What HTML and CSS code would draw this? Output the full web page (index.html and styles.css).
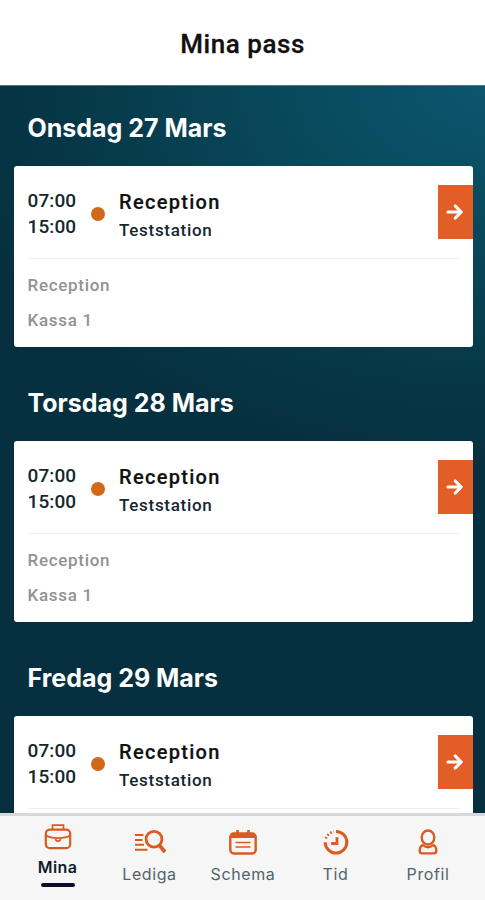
FILE: index.html
```html
<!DOCTYPE html>
<html lang="sv">
<head>
<meta charset="utf-8">
<meta name="viewport" content="width=device-width, initial-scale=1">
<title>Mina pass</title>
<link rel="stylesheet" href="styles.css">
</head>
<body>
<div class="app">
  <header class="header"><h1>Mina pass</h1></header>
  <main class="shifts">
    <section class="day">
      <h2>Onsdag 27 Mars</h2>
      <article class="card">
        <div class="summary">
          <div class="times"><span>07:00</span><span>15:00</span></div>
          <span class="dot"></span>
          <div class="place"><strong>Reception</strong><span>Teststation</span></div>
          <a class="open" href="#" aria-label="Visa"><svg width="18" height="18" viewBox="0 0 18 18"><path d="M2 9H15M9.3 3L15.2 9L9.3 15"/></svg></a>
        </div>
        <div class="details"><span>Reception</span><span>Kassa 1</span></div>
      </article>
    </section>
    <section class="day">
      <h2>Torsdag 28 Mars</h2>
      <article class="card">
        <div class="summary">
          <div class="times"><span>07:00</span><span>15:00</span></div>
          <span class="dot"></span>
          <div class="place"><strong>Reception</strong><span>Teststation</span></div>
          <a class="open" href="#" aria-label="Visa"><svg width="18" height="18" viewBox="0 0 18 18"><path d="M2 9H15M9.3 3L15.2 9L9.3 15"/></svg></a>
        </div>
        <div class="details"><span>Reception</span><span>Kassa 1</span></div>
      </article>
    </section>
    <section class="day">
      <h2>Fredag 29 Mars</h2>
      <article class="card">
        <div class="summary">
          <div class="times"><span>07:00</span><span>15:00</span></div>
          <span class="dot"></span>
          <div class="place"><strong>Reception</strong><span>Teststation</span></div>
          <a class="open" href="#" aria-label="Visa"><svg width="18" height="18" viewBox="0 0 18 18"><path d="M2 9H15M9.3 3L15.2 9L9.3 15"/></svg></a>
        </div>
      </article>
    </section>
  </main>
  <nav class="tabs">
    <a class="tab active" href="#">
      <svg width="28" height="28" viewBox="0 0 28 28"><rect x="1.8" y="6.6" width="24.4" height="18.6" rx="4" stroke-width="2.2"/><path d="M8.5 6V2.2H19.5V6M2 12.5C7 16 21 16 26 12.5M11.5 15.5C11.5 19 16.5 19 16.5 15.5" stroke-width="1.7"/></svg>
      <span>Mina</span>
    </a>
    <a class="tab" href="#">
      <svg width="32" height="28" viewBox="0 0 32 28"><circle cx="20" cy="10.2" r="7.9" stroke-width="2.8"/><path d="M25.5 16.5L31 23" stroke-width="3.8"/><path d="M1 6H9.5M1 11H8.5M1 15.8H10M1 20.7H13.5" stroke-width="2.1"/></svg>
      <span>Lediga</span>
    </a>
    <a class="tab" href="#">
      <svg width="28" height="28" viewBox="0 0 28 28"><rect x="1.3" y="4.5" width="25.4" height="20" rx="3.5" stroke-width="2.4"/><path d="M2 6.5H26" stroke-width="5"/><path d="M8.5 1V5M19.5 1V5" stroke-width="2.6"/><path d="M6.5 13.5H21.5M6.5 18H21.5" stroke-width="1.7"/></svg>
      <span>Schema</span>
    </a>
    <a class="tab" href="#">
      <svg width="28" height="28" viewBox="0 0 28 28"><path d="M14 2.4A10.8 10.8 0 1 1 3.2 13.2" stroke-width="3"/><path d="M3.8 9.6A10.8 10.8 0 0 1 12 2.6" stroke-width="2.6" stroke-dasharray="1.6 2"/><path d="M15 8.2V14.5H9.2" stroke-width="2.8"/></svg>
      <span>Tid</span>
    </a>
    <a class="tab" href="#">
      <svg width="28" height="28" viewBox="0 0 28 28"><ellipse cx="14" cy="8.5" rx="6.3" ry="7" stroke-width="2.4"/><path d="M8.8 16C5 18 4.5 24 8 24.4H20C23.5 24 23 18 19.2 16C16 18.8 12 18.8 8.8 16Z" stroke-width="2.3"/></svg>
      <span>Profil</span>
    </a>
  </nav>
</div>
</body>
</html>
```
FILE: styles.css
```css
* { box-sizing: border-box; }
body { margin: 0; font-family: Roboto, sans-serif; color: #15272e; }
a { color: inherit; text-decoration: none; }
h1, h2 { margin: 0; }
svg { display: block; fill: none; }

.app { height: 900px; display: flex; flex-direction: column; overflow: hidden; background: #fff; }

.header { flex: none; height: 85px; display: flex; align-items: center; justify-content: center; padding-top: 3px; }
.header h1 { font-size: 26px; line-height: 32px; font-weight: 500; color: #111; letter-spacing: 0.55px; -webkit-text-stroke: 0.3px #111; }

.shifts {
  flex: none;
  height: 728px;
  overflow: hidden;
  border-top: 1px solid #527481;
  background: radial-gradient(ellipse 560px 390px at 100% 0, #0b566e 0%, #09485b 38%, #063646 78%, #062f3f 100%);
}
.day { height: 275px; padding: 0 12.5px 0 13.5px; }
.day h2 {
  height: 80px;
  padding: 26px 0 0 14px;
  font: 700 25px/32px Inter, sans-serif;
  color: #fff;
  white-space: nowrap;
}

.card { height: 181px; border-radius: 3px; background: #fff; }
.summary { height: 92px; margin-left: 14px; display: flex; position: relative; }
.summary::after { content: ""; position: absolute; left: 0; right: 13px; bottom: -1px; height: 1px; background: #ededee; }
.times { width: 63px; padding-top: 22px; display: flex; flex-direction: column; font-size: 19px; line-height: 25.5px; font-weight: 500; letter-spacing: 0.1px; }
.dot { width: 14px; height: 14px; margin-top: 40.5px; border-radius: 50%; background: #d2691a; }
.place { margin-left: 14.5px; padding-top: 22px; display: flex; flex-direction: column; }
.place strong { font-size: 20px; line-height: 28px; font-weight: 500; color: #111; letter-spacing: 1.3px; -webkit-text-stroke: 0.2px #111; }
.place span { font-size: 17px; line-height: 29px; font-weight: 500; letter-spacing: 0.7px; }
.open { width: 34.5px; height: 54px; margin: 19px 0 0 auto; display: flex; align-items: center; justify-content: center; background: #e35d27; }
.open path { stroke: #fff; stroke-width: 3.2; stroke-linecap: round; stroke-linejoin: round; }
.details { padding: 10px 0 0 14px; display: flex; flex-direction: column; font-size: 17px; line-height: 35px; font-weight: 500; color: #929292; letter-spacing: 0.7px; }

.tabs { flex: 1; display: grid; grid-template-columns: 103px 81px 106px 79px 106px; padding-left: 6px; border-top: 3px solid #d7d8da; background: #f6f6f7; }
.tab { display: flex; flex-direction: column; align-items: center; padding-top: 13px; font: 400 16px/24px Inter, sans-serif; color: #536468; letter-spacing: 0.6px; }
.tab svg { stroke: #d95b22; }
.tab span { margin-top: 5px; }
.active { padding-top: 7px; font-weight: 600; color: #101c2b; letter-spacing: 0.4px; }
.active span { margin-top: 4px; }
.active::after { content: ""; width: 34px; height: 4px; margin-top: 4px; border-radius: 2px; background: #0c0d2d; }
```
